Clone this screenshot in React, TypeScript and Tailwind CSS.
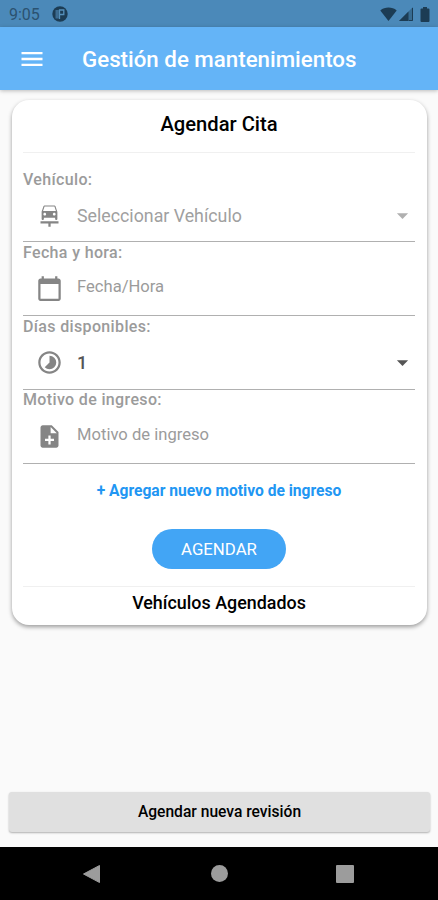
import type { ReactNode } from "react";
import {
  MdArrowDropDown,
  MdCalendarToday,
  MdCarRepair,
  MdMenu,
  MdNoteAdd,
  MdTimelapse,
} from "react-icons/md";

function StatusBar() {
  return (
    <div className="flex h-[27px] items-center bg-[#4b89b9] pl-[9px] pr-[8px] text-[#1f4058]">
      <span className="w-[43px] pt-[2px] text-[16px] leading-none text-[#2b5270]">9:05</span>
      <svg className="mt-[1px] h-4 w-4" viewBox="0 0 16 16">
        <circle cx="8" cy="8" r="7.7" fill="#1c3c54" />
        <path d="M3.500 4h3.300v8.500H3.500z" fill="#3c6c92" />
        <path d="M7.500 13V4h4.300v4.500H7.500" fill="none" stroke="#5590bb" strokeWidth="1.300" />
      </svg>
      <span className="grow" />
      <svg className="mt-[1px] h-[14px] w-[17px]" viewBox="0 0 17 14">
        <path d="M8.500 14 .3 3.400C4.800-.3 12.200-.3 16.700 3.400z" fill="#1c3c54" />
      </svg>
      <svg className="ml-[2px] mt-[1px] h-[14px] w-[14px]" viewBox="0 0 14 14">
        <path d="M14 0v14H0z" fill="#376b91" />
        <path d="M9.500 4.500V14H0z" fill="#1c3c54" />
        <path d="M13.500 1v12.500H10" fill="none" stroke="#1c3c54" />
      </svg>
      <svg className="ml-[7px] mt-[1px] h-[15px] w-[10px]" viewBox="0 0 10 15">
        <path d="M3 0h4v1.600h1.500q1 0 1 1V14q0 1-1 1h-7q-1 0-1-1V2.600q0-1 1-1H3z" fill="#1c3c54" />
      </svg>
    </div>
  );
}

function Field({
  label,
  labelClass,
  icon,
  value,
  valueClass,
  arrowClass,
}: {
  label: string;
  labelClass: string;
  icon: ReactNode;
  value: string;
  valueClass: string;
  arrowClass?: string;
}) {
  return (
    <div className="flex h-[74px] flex-col border-b border-[#b0b0b0]">
      <span className={`h-[21px] text-[16px] font-medium tracking-[0.35px] text-[#9b9b9b] ${labelClass}`}>
        {label}
      </span>
      <div className="flex grow items-center pl-[13px]">
        <span className="flex w-[41px] pb-[1px] text-[27px] text-[#858585]">{icon}</span>
        <span className={`grow ${valueClass}`}>{value}</span>
        {arrowClass && <MdArrowDropDown className={`-mr-[1px] h-[27px] w-[27px] ${arrowClass}`} />}
      </div>
    </div>
  );
}

export default function App() {
  return (
    <div className="flex h-[900px] w-[438px] flex-col overflow-hidden bg-[#fafafa] font-['Roboto',sans-serif]">
      <StatusBar />
      <header className="relative flex h-[63px] items-center bg-[#64b4f7] pl-[18px] text-white shadow-[0_1px_4px_rgba(0,0,0,0.25)]">
        <MdMenu className="h-[28px] w-[28px]" />
        <h1 className="ml-[36px] pt-[2px] text-[22.300px] font-medium leading-none">Gestión de mantenimientos</h1>
      </header>

      <main className="ml-[12px] mr-[11px] mt-[10px] flex h-[525px] flex-col rounded-[17px] bg-white pl-[11px] pr-[12px] shadow-[0_2px_4px_rgba(0,0,0,0.38)]">
        <h2 className="h-[53px] border-b border-[#f0f0f0] text-center text-[20.200px] font-medium leading-[49px] text-black">
          Agendar Cita
        </h2>
        <div className="mt-[15px]">
          <Field
            label="Vehículo:"
            labelClass="leading-[23px]"
            icon={<MdCarRepair className="mt-[2px]" />}
            value="Seleccionar Vehículo"
            valueClass="pt-[3px] text-[17.800px] text-[#a0a0a0]"
            arrowClass="text-[#b0b0b0]"
          />
          <Field
            label="Fecha y hora:"
            labelClass="leading-[21px]"
            icon={<MdCalendarToday />}
            value="Fecha/Hora"
            valueClass="pb-[4px] text-[16.600px] text-[#9b9b9b]"
          />
          <Field
            label="Días disponibles:"
            labelClass="leading-[21px]"
            icon={<MdTimelapse />}
            value="1"
            valueClass="pb-[1px] text-[18px] font-medium text-[#555555]"
            arrowClass="-mt-[1px] text-[#555555]"
          />
          <Field
            label="Motivo de ingreso:"
            labelClass="leading-[19px]"
            icon={<MdNoteAdd />}
            value="Motivo de ingreso"
            valueClass="pb-[4px] text-[16.600px] text-[#9b9b9b]"
          />
        </div>
        <button className="mt-[17px] h-[20px] text-[15.600px] font-bold leading-[20px] text-[#2196f3]">
          + Agregar nuevo motivo de ingreso
        </button>
        <button className="mt-[28px] h-[40px] w-[134px] self-center rounded-full bg-[#42a5f5] pt-[1px] text-[16.800px] text-white">
          AGENDAR
        </button>
        <h3 className="mt-[17px] border-t border-[#f0f0f0] text-center text-[17.900px] font-medium leading-[31px] text-black">
          Vehículos Agendados
        </h3>
      </main>

      <button className="ml-[9px] mr-[8px] mt-auto h-[40px] rounded-[3px] bg-[#e0e0e0] pt-[1px] text-[15.600px] font-medium text-black shadow-[0_1px_2px_rgba(0,0,0,0.3)]">
        Agendar nueva revisión
      </button>

      <nav className="mt-[15px] flex h-[53px] shrink-0 items-center bg-black pl-[83px] text-[#9c9c9c]">
        <svg className="h-[18px] w-[17px]" viewBox="0 0 17 18">
          <path d="M16.500.5v17L.5 9z" fill="currentColor" stroke="currentColor" strokeLinejoin="round" />
        </svg>
        <span className="ml-[111px] h-[17px] w-[17px] rounded-full bg-[#9c9c9c]" />
        <span className="ml-[108px] h-[18px] w-[18px] rounded-[1px] bg-[#9c9c9c]" />
      </nav>
    </div>
  );
}
